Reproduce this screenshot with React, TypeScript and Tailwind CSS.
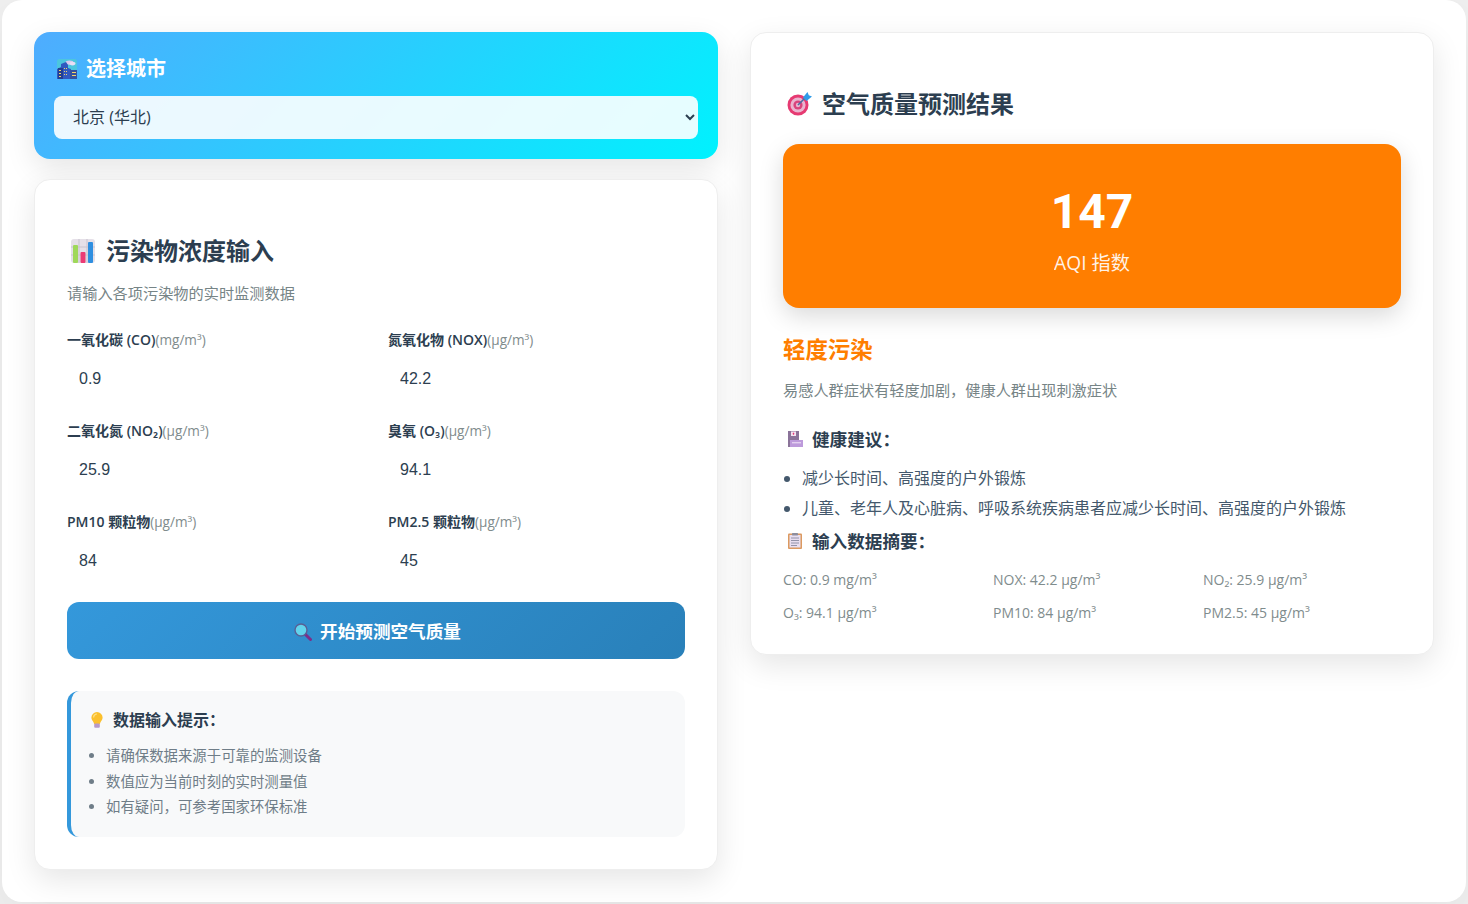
import React from "react";

const CityIcon = () => (
  <svg width="20" height="20" viewBox="0 0 20 20" className="shrink-0">
    <rect x="0" y="0" width="20" height="20" rx="2.5" fill="#4cc6de" />
    <ellipse cx="12.5" cy="3.6" rx="4" ry="2.2" fill="#d9c9ee" />
    <ellipse cx="15.5" cy="4.6" rx="3" ry="1.8" fill="#e8def5" />
    <path d="M0 20V10l4-2V5l5-2 2 3v3l3 1v1h6v9z" fill="#3159bf" />
    <rect x="1" y="9" width="5" height="11" fill="#233f93" />
    <rect x="13" y="11" width="7" height="9" fill="#35519f" />
    <path d="M2 11h2v1H2zM2 14h2v1H2zM2 17h2v1H2zM7 9h1v1H7zM9 9h1v1H9zM7 12h1v1H7zM9 12h1v1H9zM7 15h1v1H7zM9 15h1v1H9zM15 13h4v1h-4zM15 16h4v1h-4z" fill="#f3d36b" />
  </svg>
);

const ChartIcon = () => (
  <svg width="24" height="24" viewBox="0 0 24 24" className="shrink-0">
    <rect x="0" y="0" width="24" height="24" rx="3" fill="#e5e0e8" />
    <path d="M8 0v24M16 0v24M0 8h24M0 16h24" stroke="#c9c3ce" strokeWidth="1" />
    <rect x="2" y="6" width="5" height="18" rx="1" fill="#9fd85a" />
    <rect x="9.5" y="13" width="5" height="11" rx="1" fill="#ec3a74" />
    <rect x="17" y="3" width="5" height="21" rx="1" fill="#2f8fe0" />
  </svg>
);

const TargetIcon = () => (
  <svg width="25" height="24" viewBox="0 0 25 24" className="shrink-0">
    <circle cx="11" cy="13" r="10.5" fill="#e63a72" />
    <circle cx="11" cy="13" r="7.6" fill="#eab4cf" />
    <circle cx="11" cy="13" r="4.6" fill="#d9437c" />
    <circle cx="11" cy="13" r="2.2" fill="#eab4cf" />
    <path d="M11 13L20 4" stroke="#4a6fa5" strokeWidth="1.6" />
    <path d="M16 5.5L20.5 0 21.8 3.2 25 4.5 19.5 9z" fill="#2f9be8" />
  </svg>
);

const SearchIcon = () => (
  <svg width="18" height="18" viewBox="0 0 18 18" className="shrink-0">
    <path d="M11 11l5.5 5.5" stroke="#7b2f8a" strokeWidth="3" strokeLinecap="round" />
    <circle cx="7" cy="7" r="6" fill="#62d3ec" stroke="#5a5f95" strokeWidth="1.4" />
  </svg>
);

const BulbIcon = () => (
  <svg width="12" height="16" viewBox="0 0 12 16" className="shrink-0">
    <path d="M6 0a5.6 5.6 0 0 0-5.6 5.6c0 2.2 1.4 3.4 2.2 4.8.3.6.4 1 .4 1.6h6c0-.6.1-1 .4-1.6.8-1.4 2.2-2.6 2.2-4.8A5.6 5.6 0 0 0 6 0z" fill="#fbc02d" />
    <path d="M6 2a3.4 3.4 0 0 0-3.4 3.4" stroke="#fde28a" strokeWidth="1.2" fill="none" />
    <rect x="3.2" y="11.6" width="5.6" height="4.2" rx="1" fill="#b79ac9" />
  </svg>
);

const HospitalIcon = () => (
  <svg width="16" height="16" viewBox="0 0 16 16" className="shrink-0">
    <rect x="1" y="0" width="11" height="16" fill="#8a7399" />
    <rect x="4" y="0.5" width="5" height="4.5" fill="#f3e3ef" />
    <path d="M5.7 2.7h1.6M6.5 1.7v2" stroke="#e23a78" strokeWidth="1" />
    <rect x="3" y="9" width="13" height="7" fill="#bd9adb" />
    <rect x="5" y="11" width="9" height="1.4" fill="#e3cff0" />
  </svg>
);

const ClipIcon = () => (
  <svg width="14" height="16" viewBox="0 0 14 16" className="shrink-0">
    <rect x="0" y="0.5" width="14" height="15.5" rx="1" fill="#dc9a60" />
    <rect x="1.5" y="2" width="11" height="12.5" fill="#e8def0" />
    <path d="M3 5h8M3 7.5h8M3 10h8M3 12.5h6" stroke="#8a8aa0" strokeWidth="0.9" />
    <rect x="4" y="0" width="6" height="2.4" rx="0.6" fill="#8d8d9d" />
  </svg>
);

const fields = [
  ["一氧化碳 (CO)", "(mg/m³)", "0.9"],
  ["氮氧化物 (NOX)", "(μg/m³)", "42.2"],
  ["二氧化氮 (NO₂)", "(μg/m³)", "25.9"],
  ["臭氧 (O₃)", "(μg/m³)", "94.1"],
  ["PM10 颗粒物", "(μg/m³)", "84"],
  ["PM2.5 颗粒物", "(μg/m³)", "45"],
];

const summary = [
  "CO: 0.9 mg/m³",
  "NOX: 42.2 μg/m³",
  "NO₂: 25.9 μg/m³",
  "O₃: 94.1 μg/m³",
  "PM10: 84 μg/m³",
  "PM2.5: 45 μg/m³",
];

export default function App() {
  return (
    <div className="min-h-[904px] bg-[#efefef] px-[2px] font-['Open_Sans','Noto_Sans_CJK_SC',sans-serif] text-[#2c3e50]">
      <div className="grid h-[902px] grid-cols-2 items-start gap-8 rounded-[20px] bg-white p-8 shadow-[0_20px_60px_rgba(0,0,0,0.05)]">
        <div className="flex flex-col gap-5">
          <div className="h-[127px] rounded-2xl bg-[linear-gradient(135deg,#4facfe_0%,#00f2fe_100%)] px-5 pt-[23px] shadow-[0_10px_30px_rgba(0,0,0,0.1)]">
            <div className="ml-[3px] flex h-[27px] items-center gap-[9px] text-xl font-bold leading-[27px] text-white">
              <CityIcon />
              <span>选择城市</span>
            </div>
            <select className="mt-[14px] h-[43px] w-full rounded-lg bg-white/90 pb-[2px] pl-[15px] pr-[14px] text-base text-[#2c3e50] outline-none">
              <option>北京 (华北)</option>
            </select>
          </div>

          <div className="h-[691px] rounded-2xl border border-[#eeeeee] bg-white px-8 pt-[56px] shadow-[0_10px_30px_rgba(0,0,0,0.1)]">
            <h2 className="ml-[4px] flex h-[30px] items-center gap-[11px] text-2xl font-bold leading-[30px]">
              <ChartIcon />
              <span>污染物浓度输入</span>
            </h2>
            <p className="mt-[17px] text-[15.2px] leading-[20px] text-[#768486]">请输入各项污染物的实时监测数据</p>

            <div className="mt-[27px] grid grid-cols-2 gap-x-6">
              {fields.map(([label, unit, value]) => (
                <div key={label} className="h-[91px]">
                  <label className="block text-[14px] font-semibold leading-[20px] text-[#2c3e50]">
                    {label}
                    <span className="text-[13.6px] font-normal text-[#7f8c8d]">{unit}</span>
                  </label>
                  <input
                    readOnly
                    value={value}
                    className="mt-[9px] block h-[40px] w-full bg-transparent px-3 font-['Liberation_Sans',sans-serif] text-base text-[#2c3e50] outline-none"
                  />
                </div>
              ))}
            </div>

            <button className="mt-[-1px] flex h-[57px] w-full items-center justify-center gap-2 rounded-xl bg-[linear-gradient(135deg,#3498db_0%,#2980b9_100%)] pl-[3px] pt-[2px] text-[17.6px] font-bold text-white">
              <SearchIcon />
              <span>开始预测空气质量</span>
            </button>

            <div className="mt-8 h-[146px] rounded-xl border-l-4 border-[#3498db] bg-[#f8f9fa] pl-5 pt-[18px]">
              <div className="flex h-[22px] items-center gap-[10px] text-base font-bold leading-[22px] text-[#2c3e50]">
                <BulbIcon />
                <span>数据输入提示：</span>
              </div>
              <ul className="mt-[12px] list-disc pl-[15px] text-[14.4px] leading-[25.5px] text-[#6f7d88]">
                <li>请确保数据来源于可靠的监测设备</li>
                <li>数值应为当前时刻的实时测量值</li>
                <li>如有疑问，可参考国家环保标准</li>
              </ul>
            </div>
          </div>
        </div>

        <div className="h-[623px] rounded-2xl border border-[#eeeeee] bg-white px-8 pt-[56px] shadow-[0_10px_30px_rgba(0,0,0,0.1)]">
          <h2 className="ml-[4px] flex h-[30px] items-center gap-[10px] text-2xl font-bold leading-[30px]">
            <TargetIcon />
            <span>空气质量预测结果</span>
          </h2>
          <div className="mt-[25px] flex h-[164px] flex-col items-center rounded-2xl bg-[#ff7e00] pt-[39px] text-white shadow-[0_8px_25px_rgba(0,0,0,0.15)]">
            <div className="font-['Roboto',sans-serif] text-5xl font-bold leading-[58px]">147</div>
            <div className="mt-[9px] text-[19.2px] leading-[26px] opacity-90">AQI 指数</div>
          </div>
          <h3 className="mt-[26px] text-[22.4px] font-bold leading-[32px] text-[#ff7e00]">轻度污染</h3>
          <p className="mt-[12px] text-[15.2px] leading-[24px] text-[#768486]">易感人群症状有轻度加剧，健康人群出现刺激症状</p>
          <div className="ml-[4px] mt-[25px] flex h-[24px] items-center gap-[9px] text-[17.6px] font-bold leading-[24px]">
            <HospitalIcon />
            <span>健康建议：</span>
          </div>
          <ul className="mt-[12px] list-disc pl-[19px] text-base leading-[30px] text-[#44586c]">
            <li>减少长时间、高强度的户外锻炼</li>
            <li>儿童、老年人及心脏病、呼吸系统疾病患者应减少长时间、高强度的户外锻炼</li>
          </ul>
          <div className="ml-[5px] mt-[6px] flex h-[24px] items-center gap-[10px] text-[17.6px] font-bold leading-[24px]">
            <ClipIcon />
            <span>输入数据摘要：</span>
          </div>
          <div className="mt-[10px] grid grid-cols-3 gap-x-3 text-[14px] leading-[33px] text-[#7f8c8d]">
            {summary.map((s) => (
              <div key={s}>{s}</div>
            ))}
          </div>
        </div>
      </div>
    </div>
  );
}
